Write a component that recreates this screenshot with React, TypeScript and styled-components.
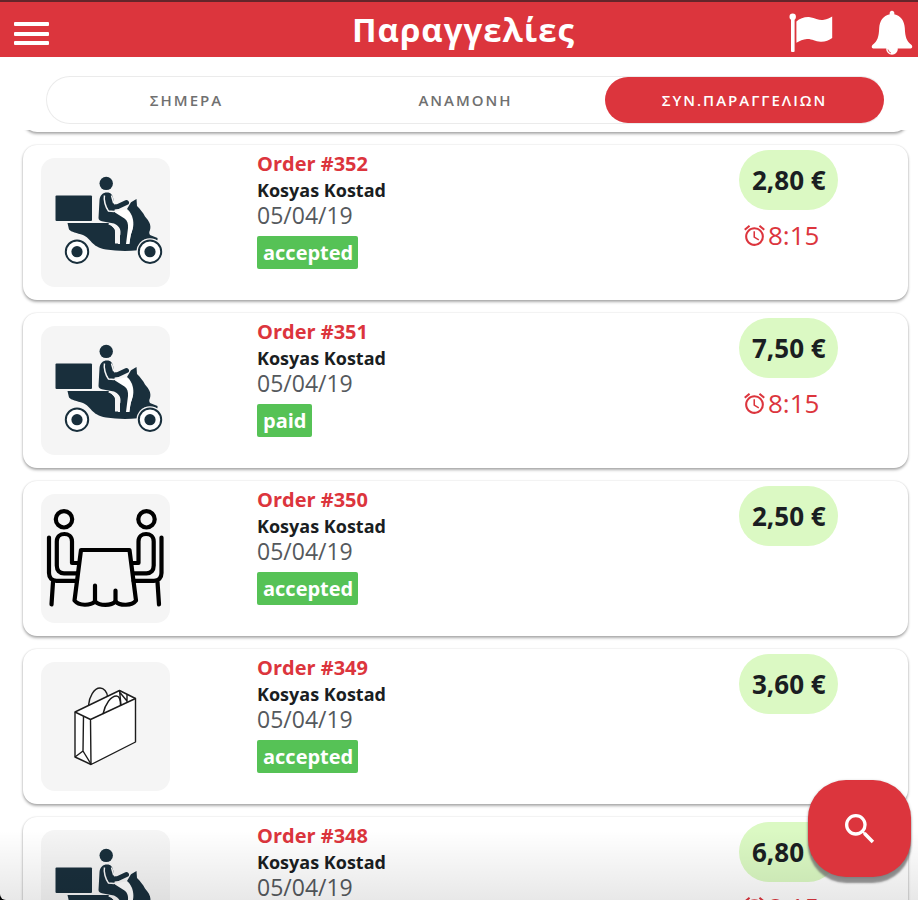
import React from "react";
import styled, { createGlobalStyle } from "styled-components";
import { MdAccessAlarm, MdSearch } from "react-icons/md";

const RED = "#dc353d";
const NAVY = "#192f3c";

const GlobalStyle = createGlobalStyle`
  *, *::before, *::after { box-sizing: border-box; }
  body { margin: 0; background: #000; }
  button { font: inherit; border: 0; padding: 0; background: none; cursor: pointer; }
`;

const Page = styled.div`
  position: relative;
  display: flex;
  flex-direction: column;
  height: 100vh;
  overflow: hidden;
  background: #fff;
  border-bottom-left-radius: 6px;
  font-family: "Open Sans", "Noto Sans", sans-serif;
  color: #1a1e22;
`;

const TopBar = styled.header`
  flex: none;
  display: grid;
  grid-template-columns: 1fr auto 1fr;
  align-items: center;
  height: 57px;
  padding: 0 5px 0 14px;
  background: ${RED};
  border-top: 2px solid #64252a;
`;

const Title = styled.h1`
  margin: 0;
  font-size: 33px;
  line-height: 48px;
  font-weight: 700;
  letter-spacing: 1px;
  color: #fff;
`;

const IconButton = styled.button`
  display: flex;
  color: #fff;
`;

const MenuButton = styled(IconButton)`
  justify-self: start;
  padding-top: 8px;
`;

const Actions = styled.div`
  justify-self: end;
  display: flex;
  align-items: center;
  gap: 38px;
  padding-top: 6px;
`;

const Tabs = styled.div`
  flex: none;
  display: grid;
  grid-template-columns: repeat(3, 1fr);
  height: 48px;
  margin: 19px 33px 6px 46px;
  border: 1px solid #ebebeb;
  border-right-color: transparent;
  border-radius: 24px;
`;

const Tab = styled.button<{ $active?: boolean }>`
  border-radius: 23px;
  font-size: 15px;
  line-height: 24px;
  font-weight: 600;
  letter-spacing: 2px;
  background: ${(p) => (p.$active ? RED : "transparent")};
  color: ${(p) => (p.$active ? "#fff" : "#707070")};
`;

const cardShadow = "0 2px 3px rgba(0, 0, 0, 0.32), 0 0 2px rgba(0, 0, 0, 0.14)";

const ScrolledEdge = styled.div`
  flex: none;
  height: 8px;
  margin: 0 10px 7px 23px;
  overflow: hidden;

  &::before {
    content: "";
    display: block;
    height: 40px;
    margin-top: -38px;
    border-radius: 14px;
    background: #fff;
    box-shadow: ${cardShadow};
  }
`;

const List = styled.ul`
  flex: none;
  display: flex;
  flex-direction: column;
  gap: 13px;
  margin: 0;
  padding: 0 10px 0 23px;
  list-style: none;
`;

const Card = styled.li`
  display: grid;
  grid-template-columns: 234px 1fr 169px;
  height: 155px;
  border-radius: 14px;
  background: #fff;
  box-shadow: ${cardShadow};
`;

const Thumb = styled.div`
  width: 129px;
  height: 129px;
  margin: 13px 0 0 18px;
  border-radius: 14px;
  background: #f5f5f5;

  svg { display: block; width: 100%; height: 100%; }
`;

const Info = styled.div`
  display: flex;
  flex-direction: column;
  align-items: flex-start;
  padding-top: 5px;
`;

const OrderNo = styled.h2`
  margin: 0;
  font-size: 20px;
  line-height: 28px;
  font-weight: 700;
  color: ${RED};
`;

const Customer = styled.div`
  font-size: 18px;
  line-height: 25px;
  font-weight: 700;
`;

const OrderDate = styled.time`
  font-size: 23px;
  line-height: 25px;
  font-weight: 400;
  color: #55595d;
`;

const Status = styled.span`
  margin-top: 8px;
  padding: 0 5px 0 6px;
  border-radius: 2px;
  font-size: 20px;
  line-height: 33px;
  font-weight: 700;
  color: #fff;
  background: #56c256;
`;

const Side = styled.div`
  display: flex;
  flex-direction: column;
  align-items: flex-start;
  padding-top: 5px;
`;

const Price = styled.div`
  padding: 0 12px 0 13px;
  border-radius: 30px;
  font-size: 26px;
  line-height: 60px;
  font-weight: 700;
  white-space: nowrap;
  background: #dbf9c3;
`;

const Time = styled.div`
  display: flex;
  align-items: center;
  gap: 1px;
  padding: 7px 0 0 3px;
  font-size: 26px;
  line-height: 36px;
  color: ${RED};
`;

const BottomShade = styled.div`
  position: absolute;
  inset: auto 0 0 0;
  height: 70px;
  pointer-events: none;
  background: linear-gradient(rgba(0, 0, 0, 0), rgba(0, 0, 0, 0.09));
`;

const SearchButton = styled.button`
  position: absolute;
  right: 7px;
  bottom: 23px;
  display: flex;
  align-items: center;
  justify-content: center;
  width: 103px;
  height: 97px;
  border-radius: 38px;
  color: #fff;
  background: ${RED};
  box-shadow: 0 6px 2px rgba(110, 110, 110, 0.75), 0 1px 3px rgba(0, 0, 0, 0.3);
`;

const MenuIcon = () => (
  <svg width="35" height="24" viewBox="0 0 35 24" fill="#fff" aria-hidden="true">
    <rect x="0" y="0" width="35" height="4" rx="1" />
    <rect x="0" y="10" width="35" height="4" rx="1" />
    <rect x="0" y="19" width="35" height="4" rx="1" />
  </svg>
);

const FlagIcon = () => (
  <svg width="44" height="40" viewBox="0 0 44 40" fill="#fff" aria-hidden="true">
    <circle cx="3.7" cy="3.7" r="3.2" />
    <rect x="2" y="4" width="3.6" height="35" rx="1" />
    <path d="M7.4 8.4C11 5.4 16 3.6 21 4.2C27 5 30 7.8 35 6.8C38 6.2 41 4.8 43.2 3.4V25C40 27.4 36 29 31.6 28.8C26 28.4 23 25.8 18 26C14 26.2 10.6 28 7.4 29.8Z" />
  </svg>
);

const BellIcon = () => (
  <svg width="42" height="46" viewBox="0 0 42 46" fill="#fff" aria-hidden="true">
    <path d="M18.8 4.2A2.4 2.4 0 1 1 23.2 4.2C30 5.6 33.4 11 33.8 18C34.2 27 35.4 31 40.6 35C42 37 41 38.6 39 38.6H3C1 38.6 0 37 1.4 35C6.6 31 7.8 27 8.2 18C8.6 11 12 5.6 18.8 4.2Z" />
    <circle cx="21" cy="39" r="5.8" />
    <path d="M17 39.5A4 4 0 0 0 20 43" fill="none" stroke={RED} strokeWidth="0.8" />
  </svg>
);

const ScooterIcon = () => (
  <svg viewBox="0 0 129 129" aria-hidden="true">
    <rect x="14.5" y="37.5" width="36.5" height="25.5" rx="1" fill={NAVY} />
    <path
      d="M26.500 65H68L88 86L90 76C93 69 93 64 91 58C89.500 54.500 88 52.500 86 51L90 44.300L95.500 41L96 48C99 51 102 54.500 104 58.500C108 63 110.500 67 109 72C108 74 108 75.500 109 77L116.500 80V82.500C111 80.500 106 80.500 103 82C98.500 84.500 97.500 88 97 92.300C85 93.500 75 93 65 91.500C50 89 50 80 42 77C36 75 30 74 28 71.500Z"
      fill={NAVY}
    />
    <path d="M73 53.500L85.500 51.500C90 55 92 61 92 67C92 72 89.500 76 89.200 80L88.500 86H84L83 66Z" fill="#fff" />
    <path d="M56 62.500L68 63.500C74 65 78 67 78 73V86" fill="none" stroke="#f5f5f5" strokeWidth="2" />
    <path d="M68 64.500C73 66 76 69 76 74V85.500" fill="none" stroke="#f5f5f5" strokeWidth="4" />
    <path
      d="M57.500 60L58.500 42C59 37 62 34.500 66 34.500C70 34.500 72 37 72.500 42L74 54.500L83.500 60.500C86.500 62.500 87.300 66 87 70L85 86H79L79.500 74C79.500 70 77 67.500 73 65.500L62 63.500C59 63 57.500 62 57.500 60Z"
      fill={NAVY}
    />
    <path d="M63.500 37.500C62.500 42 64.500 49 67.500 53L73 53.500L84.500 49.500" fill="none" stroke="#f5f5f5" strokeWidth="1.500" />
    <path d="M70.500 37.500L72.500 44.500L83 41.500H88" fill="none" stroke="#f5f5f5" strokeWidth="1.500" />
    <path d="M67 40L69.500 49.500L77 48.500L85.500 44.500" fill="none" stroke={NAVY} strokeWidth="5" strokeLinecap="round" strokeLinejoin="round" />
    <circle cx="65.200" cy="25.400" r="6.700" fill={NAVY} />
    {[36, 109].map((cx) => (
      <g key={cx}>
        <circle cx={cx} cy="93.700" r="13.500" fill="#f5f5f5" />
        <circle cx={cx} cy="93.700" r="11.200" fill="#fff" stroke={NAVY} strokeWidth="2" />
        <circle cx={cx} cy="93.700" r="5.600" fill={NAVY} />
      </g>
    ))}
  </svg>
);

const Diner = () => (
  <>
    <circle cx="23" cy="25.300" r="8.200" />
    <path d="M8 43.500V79C8 84 11 86.800 15.500 86.800H36" />
    <path d="M12 88L10.500 110.500" />
    <path d="M37.500 69H31V47.500C31 37.500 15.800 37.500 15.800 47.500V71.500C15.800 76.500 18.500 79.300 23 79.300H36" />
  </>
);

const TableIcon = () => (
  <svg viewBox="0 0 129 129" fill="none" stroke="#000" strokeWidth="4.200" strokeLinecap="round" strokeLinejoin="round" aria-hidden="true">
    <Diner />
    <g transform="translate(128.500 0) scale(-1 1)">
      <Diner />
    </g>
    <path d="M40 56H88.500L95 106.500C91 112 79 112 74.500 107.500C70 112 59 112 54 107.500C49 112 38 112 33.500 106.500Z" />
    <path d="M54 91.500V107M74.500 96.500V107" />
  </svg>
);

const BagIcon = () => (
  <svg viewBox="0 0 129 129" fill="none" stroke="#1c1c1c" strokeWidth="1.400" strokeLinejoin="round" aria-hidden="true">
    <path d="M34 50L78.500 28.500L94.500 36.500V80L50 102.500L34 95Z" fill="#fff" />
    <path d="M34 50L49.500 57.500L94.500 36.500M49.500 57.500L50 102.500" />
    <path d="M42.500 54L42 89L34 95M42 89L50 102" />
    <path d="M78.500 28.500L80 43M86 32.500V40.500M78.500 30L86 39" />
    <path d="M47.500 43.500C48 35 53 26 59 26C63 26 66 30 66.500 34.500" />
    <path d="M62 52C64 42 70 34 75.500 34C79 34 79.500 38 79.500 43.500" />
  </svg>
);

type Kind = "delivery" | "table" | "takeaway";

interface Order {
  id: number;
  kind: Kind;
  status: string;
  price: string;
  time?: string;
}

const icons: Record<Kind, React.FC> = {
  delivery: ScooterIcon,
  table: TableIcon,
  takeaway: BagIcon,
};

const orders: Order[] = [
  { id: 352, kind: "delivery", status: "accepted", price: "2,80 €", time: "8:15" },
  { id: 351, kind: "delivery", status: "paid", price: "7,50 €", time: "8:15" },
  { id: 350, kind: "table", status: "accepted", price: "2,50 €" },
  { id: 349, kind: "takeaway", status: "accepted", price: "3,60 €" },
  { id: 348, kind: "delivery", status: "accepted", price: "6,80 €", time: "8:15" },
];

const OrderCard = ({ order }: { order: Order }) => {
  const Icon = icons[order.kind];
  return (
    <Card>
      <Thumb><Icon /></Thumb>
      <Info>
        <OrderNo>Order #{order.id}</OrderNo>
        <Customer>Kosyas Kostad</Customer>
        <OrderDate>05/04/19</OrderDate>
        <Status>{order.status}</Status>
      </Info>
      <Side>
        <Price>{order.price}</Price>
        {order.time && (
          <Time><MdAccessAlarm size={25} aria-hidden="true" />{order.time}</Time>
        )}
      </Side>
    </Card>
  );
};

export default function App() {
  return (
    <Page>
      <GlobalStyle />
      <TopBar>
        <MenuButton aria-label="Menu"><MenuIcon /></MenuButton>
        <Title>Παραγγελίες</Title>
        <Actions>
          <IconButton aria-label="Flag"><FlagIcon /></IconButton>
          <IconButton aria-label="Notifications"><BellIcon /></IconButton>
        </Actions>
      </TopBar>
      <Tabs role="tablist">
        <Tab role="tab" aria-selected="false">ΣΗΜΕΡΑ</Tab>
        <Tab role="tab" aria-selected="false">ΑΝΑΜΟΝΗ</Tab>
        <Tab role="tab" aria-selected="true" $active>ΣΥΝ.ΠΑΡΑΓΓΕΛΙΩΝ</Tab>
      </Tabs>
      <ScrolledEdge />
      <List>
        {orders.map((o) => <OrderCard key={o.id} order={o} />)}
      </List>
      <BottomShade />
      <SearchButton aria-label="Search"><MdSearch size={40} /></SearchButton>
    </Page>
  );
}
